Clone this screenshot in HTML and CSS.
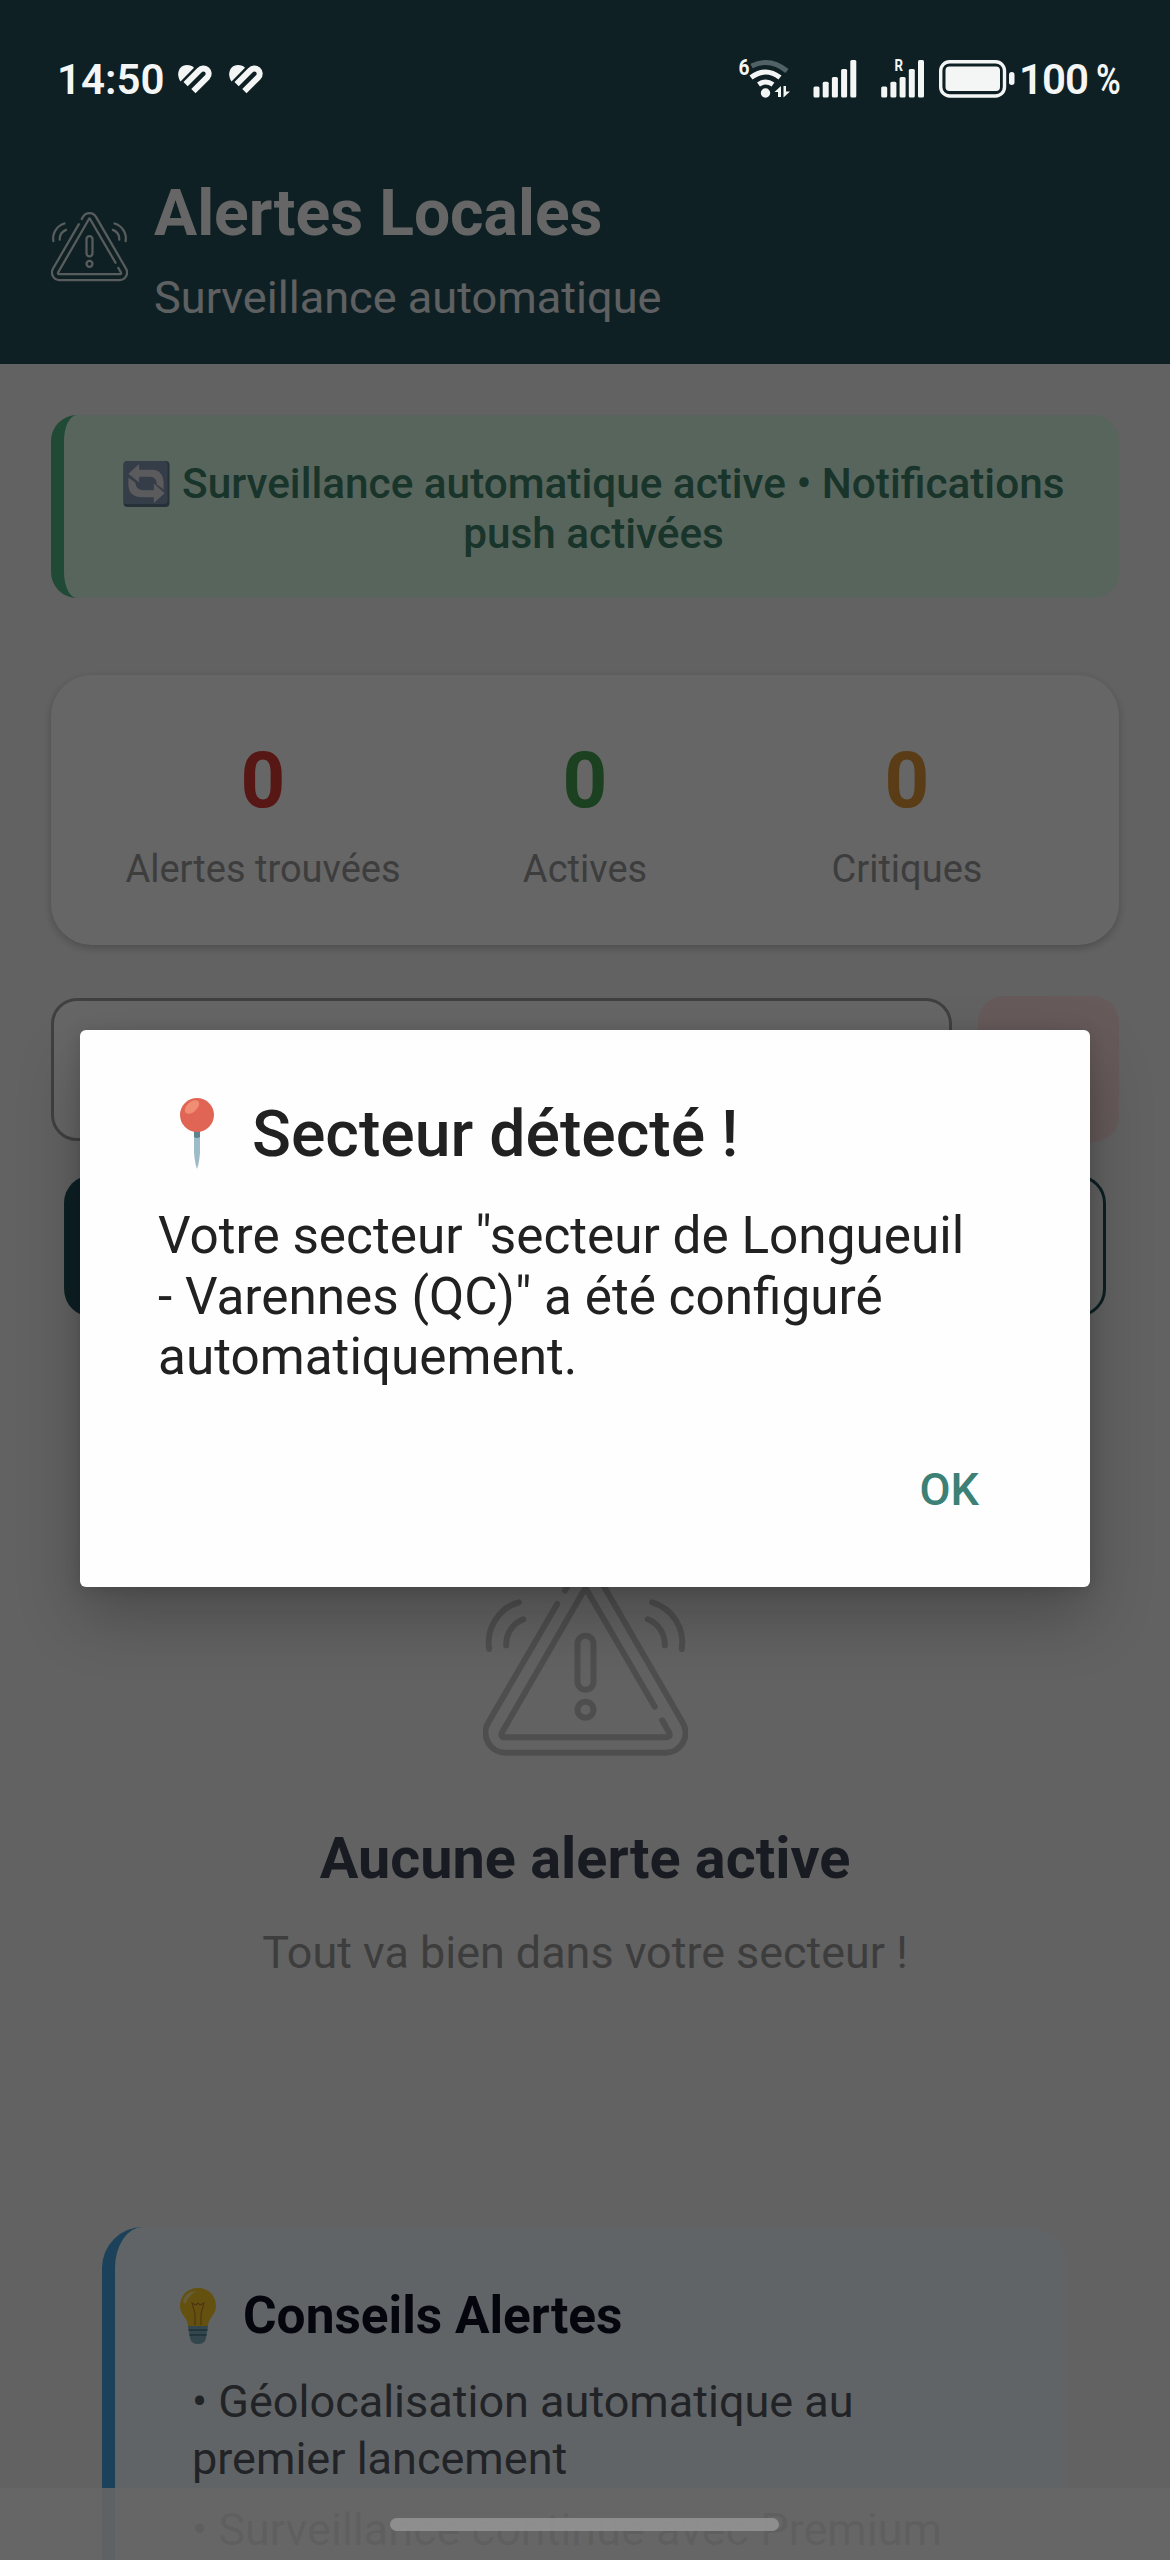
FILE: index.html
```html
<!DOCTYPE html>
<html lang="fr">
<head>
<meta charset="utf-8">
<title>Alertes Locales</title>
<link rel="stylesheet" href="styles.css">
</head>
<body>
<svg class="defs" width="0" height="0" aria-hidden="true">
  <symbol id="alert" viewBox="0 0 205 205">
    <g fill="none" stroke="currentColor" stroke-width="6" stroke-linecap="round" stroke-linejoin="round">
      <path d="M82 29.500L85.200 23.500A20 20 0 0 1 119.800 23.500L199.800 161.700A20 20 0 0 1 182.500 191.700H22.500A20 20 0 0 1 5.200 161.700L74.200 43"/>
      <path d="M171.800 145.700L103.500 28.500Q102.500 27 101.500 28.500L19 171.500Q17 176.300 21.500 176.300H184Q188 176 186.200 171.800L179.200 159.300"/>
      <rect x="94.500" y="74.700" width="16" height="54" rx="8"/>
      <circle cx="102.500" cy="148.700" r="8"/>
      <path d="M35.800 41.300A42 42 0 0 0 6.200 88M40.200 58.300A27 27 0 0 0 23.200 84.300"/>
      <path d="M169.200 41.300A42 42 0 0 1 198.800 88M164.800 58.300A27 27 0 0 1 181.800 84.300"/>
    </g>
  </symbol>
  <symbol id="heart" viewBox="0 0 35 31">
    <path d="M2.500 16.500C-2.500 9 1 0 9 0C12 0 14.500 1 16 2.700Z" fill="currentColor"/>
    <path d="M7.600 19.100L21.500 5.200A5 5 0 0 1 29.400 12.100L15.400 26.100" fill="none" stroke="currentColor" stroke-width="6"/>
    <path d="M11.200 22.700L14 19.900" fill="none" stroke="currentColor" stroke-width="0"/>
  </symbol>
</svg>

<div class="screen">
  <header class="header">
    <svg class="header-icon"><use href="#alert"/></svg>
    <div>
      <h1 class="header-title">Alertes Locales</h1>
      <p class="header-sub">Surveillance automatique</p>
    </div>
  </header>

  <main class="content">
    <div class="banner"><svg class="sync" viewBox="0 0 47 47"><rect width="47" height="47" rx="4" fill="#607890"/><rect width="45" height="44" rx="4" fill="#8298b4"/><path d="M5 13L16 3V9H29Q40 9 41 22V29L34 24Q34 16 27 16H16V22Z" fill="#e4e4e8"/><path d="M42 33L31 43V37H19Q6 37 5 25V17L12 22Q13 30 20 30H31V23Z" fill="#e4e4e8"/></svg> Surveillance automatique active • Notifications push activées</div>

    <section class="stats">
      <div class="stat"><b class="num red">0</b><span class="label">Alertes trouvées</span></div>
      <div class="stat"><b class="num green">0</b><span class="label">Actives</span></div>
      <div class="stat"><b class="num orange">0</b><span class="label">Critiques</span></div>
    </section>

    <div class="search">
      <div class="field"></div>
      <div class="clear"></div>
    </div>
    <div class="actions">
      <div class="action filled"></div>
      <div class="action outlined"></div>
    </div>

    <section class="empty">
      <svg class="empty-icon"><use href="#alert"/></svg>
      <h2 class="empty-title">Aucune alerte active</h2>
      <p class="empty-sub">Tout va bien dans votre secteur !</p>
    </section>

    <section class="tips">
      <h3 class="tips-title"><svg class="bulb" viewBox="0 0 36 56"><path d="M18 0C7 0 0 8 0 18C0 27 8 30 8 38H28C28 30 36 27 36 18C36 8 29 0 18 0Z" fill="#fbcb28"/><path d="M3 13Q6 3 16 3Q9 7 5 16Z" fill="#fdea90"/><path d="M15 37V26L12 15L16 17L18 15L20 17L24 15L21 26V37" fill="none" stroke="#c9822c" stroke-width="1.200"/><path d="M8 38H28L26 50Q25 56 18 56Q11 56 10 50Z" fill="#7fb0c2"/><path d="M8.500 42H27.500M9.500 47H26.500" stroke="#48788a" stroke-width="1.500"/></svg>Conseils Alertes</h3>
      <p class="tip">• Géolocalisation automatique au premier lancement</p>
      <p class="tip">• Surveillance continue avec Premium</p>
    </section>
  </main>
  <div class="nav-shade"></div>
  <div class="scrim"></div>

  <div class="status">
    <span class="time">14:50</span>
    <svg class="heart"><use href="#heart"/></svg>
    <svg class="heart second"><use href="#heart"/></svg>
    <svg class="system" viewBox="735 55 285 48">
      <text x="738.500" y="75" class="tiny" font-size="22" textLength="11" lengthAdjust="spacingAndGlyphs">6</text>
      <g fill="none" stroke="#f4f6f6" stroke-width="5">
        <path d="M751.500 66Q770 57 787 71" stroke="#526166"/>
        <path d="M751 77.500Q765.500 66.500 780 77.500"/>
        <path d="M758.500 84.500Q765.500 79.500 773 84.500"/>
      </g>
      <g fill="#f4f6f6">
        <circle cx="765.500" cy="93" r="4.700"/>
        <path d="M774.500 92L781 86V97H778V92ZM790 91.500L783.500 97.500V86H786V91.500Z"/>
        <rect x="813.500" y="86.500" width="6" height="11" rx="1.500"/><rect x="822.700" y="81.700" width="6" height="15.800" rx="1.500"/><rect x="831.900" y="77" width="6" height="20.500" rx="1.500"/><rect x="841.100" y="69" width="6" height="28.500" rx="1.500"/><rect x="850.300" y="60" width="6" height="37.500" rx="1.500"/>
        <rect x="881.200" y="86.500" width="6" height="11" rx="1.500"/><rect x="890.400" y="81.700" width="6" height="15.800" rx="1.500"/><rect x="899.600" y="77" width="6" height="20.500" rx="1.500"/><rect x="908.800" y="69" width="6" height="28.500" rx="1.500"/><rect x="918" y="60" width="6" height="37.500" rx="1.500"/>
        <rect x="945.500" y="66.500" width="54.500" height="24.500" rx="4"/>
        <rect x="1009" y="72" width="5.500" height="13" rx="2.700"/>
      </g>
      <text x="894.500" y="71" class="tiny" font-size="16" textLength="8.500" lengthAdjust="spacingAndGlyphs">R</text>
      <rect x="940.700" y="61.700" width="63.800" height="34.300" rx="9" fill="none" stroke="#f4f6f6" stroke-width="3.400"/>
    </svg>
    <span class="percent">100 <span class="sign">%</span></span>
  </div>

  <div class="dialog">
    <h2 class="dialog-title"><svg class="pin" viewBox="0 0 34 71"><path d="M14 32H20V55Q19 66 17 71Q15 66 14 55Z" fill="#9ebcc8"/><path d="M14 32H20V39Q17 41 14 39Z" fill="#5c8390"/><circle cx="17" cy="17" r="17" fill="#e06555"/><ellipse cx="12" cy="9" rx="8.500" ry="5" transform="rotate(-42 12 9)" fill="#f08d72"/></svg>Secteur détecté !</h2>
    <p class="dialog-text">Votre secteur "secteur de Longueuil - Varennes (QC)" a été configuré automatiquement.</p>
    <div class="dialog-actions"><span class="ok">OK</span></div>
  </div>
  <div class="home-bar"></div>
</div>
</body>
</html>
```
FILE: styles.css
```css
* { box-sizing: border-box; margin: 0; padding: 0; }
body { background: #f5f5f5; font-family: Roboto, "Noto Sans", sans-serif; }
svg { display: block; flex: none; }
.defs { position: absolute; }
.screen { position: relative; width: 1170px; height: 2560px; overflow: hidden; background: #f5f5f5; }

.header { height: 364px; padding: 174.800px 51px 0; display: flex; gap: 26px; background: #23515a; color: #fff; }
.header-icon { width: 77px; height: 77px; margin-top: 33px; color: rgba(255, 255, 255, .85); }
.header-title { font-size: 64.200px; line-height: 76px; font-weight: 700; }
.header-sub { margin-top: 21px; font-size: 45.100px; line-height: 52px; opacity: .92; }

.content { padding: 51px; display: flex; flex-direction: column; }
.banner { height: 183px; padding: 44px 42px 40px 46px; border-left: 13px solid #52b788; border-radius: 26px; background: #dcfce7; color: #40826a; font-size: 42.300px; line-height: 49.500px; font-weight: 500; text-align: center; }
.sync { display: inline-block; width: 47px; height: 46px; margin-right: 2px; vertical-align: -9px; }

.stats { margin-top: 76.500px; height: 270px; padding: 60px 51px 0; display: grid; grid-template-columns: repeat(3, 1fr); border-radius: 41px; background: #fff; box-shadow: 0 3px 8px rgba(0, 0, 0, .22); }
.stat { display: flex; flex-direction: column; align-items: center; gap: 19px; }
.num { font-size: 78px; line-height: 92px; font-weight: 700; }
.red { color: #d63a36; }
.green { color: #45a350; }
.orange { color: #e0983a; }
.label { font-size: 38px; line-height: 46px; color: #9a9a9a; white-space: nowrap; }

.search { margin-top: 51.500px; display: flex; gap: 26px; align-items: center; }
.field { flex: 1; height: 143px; border: 3px solid #a0a0a0; border-radius: 26px; background: #fff; }
.clear { width: 141px; height: 146px; border-radius: 26px; background: #ffe1e1; }
.actions { margin: 33px 13px 0; height: 142px; display: flex; gap: 26px; }
.action { flex: 1; border-radius: 28px; }
.filled { background: #23515a; }
.outlined { border: 3px solid #23515a; }

.empty { margin-top: 244px; display: flex; flex-direction: column; align-items: center; }
.empty-icon { width: 205px; height: 205px; color: #c3c3c3; }
.empty-title { margin-top: 58.500px; font-size: 57.600px; line-height: 68px; font-weight: 700; color: #3f4458; }
.empty-sub { margin-top: 34px; font-size: 44.900px; line-height: 52px; color: #9a9a9a; }

.tips { margin: 248px 51px 0; height: 430px; padding: 58px 65px 0; border-left: 13px solid #46a4e4; border-radius: 41px; background: #f0f9ff; }
.tips-title { display: flex; gap: 27px; font-size: 51.400px; line-height: 62px; font-weight: 700; color: #0b0e22; }
.bulb { width: 36px; height: 56px; margin-top: 3px; }
.tip { margin: 26px 0 0 12px; width: 790px; font-size: 45px; line-height: 57.500px; color: #53585f; }
.tip + .tip { margin-top: 13px; }

.nav-shade { position: absolute; left: 0; right: 0; bottom: 0; height: 72px; background: rgba(255, 255, 255, .9); }
.scrim { position: absolute; inset: 0; background: rgba(0, 0, 0, .6); }

.status { position: absolute; left: 0; top: 56px; width: 1170px; height: 48px; padding-left: 57px; display: flex; align-items: center; color: #f4f6f6; font-size: 42px; line-height: 48px; font-weight: 600; }
.time { width: 121px; }
.heart { width: 35px; height: 31px; }
.second { margin-left: 16px; }
.system { width: 285px; height: 48px; margin: -2px 0 0 471px; }
.tiny { font-family: Roboto, sans-serif; font-weight: 700; fill: #f4f6f6; }
.percent { display: flex; gap: 8px; margin-left: -1px; letter-spacing: -1px; white-space: nowrap; }
.sign { transform: scaleX(.8); transform-origin: left; }

.dialog { position: absolute; left: 80px; top: 1030px; width: 1010px; height: 557px; padding: 66px 78px 0; border-radius: 6px; background: #fefefe; color: #212121; box-shadow: 0 30px 64px rgba(0, 0, 0, .24), 0 2px 16px rgba(0, 0, 0, .13); }
.dialog-title { display: flex; padding-left: 22px; gap: 38px; font-size: 64.300px; line-height: 76px; font-weight: 500; }
.pin { width: 34px; height: 71px; margin-top: 2px; }
.dialog-text { width: 825px; margin-top: 34.300px; font-size: 51.300px; line-height: 60.500px; }
.dialog-actions { margin-top: 76px; padding-right: 33px; text-align: right; }
.ok { font-size: 45px; line-height: 52px; font-weight: 500; color: #3d8075; }
.home-bar { position: absolute; left: 390px; top: 2518px; width: 389px; height: 13px; border-radius: 7px; background: rgba(148, 148, 148, .88); }
```
